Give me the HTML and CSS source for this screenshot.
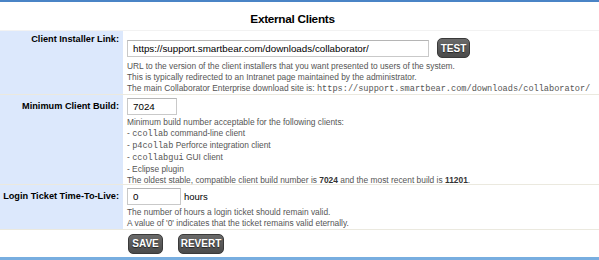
FILE: index.html
```html
<!DOCTYPE html>
<html>
<head>
<meta charset="utf-8">
<link rel="stylesheet" href="styles.css">
</head>
<body>
<div class="panel">
  <div class="title">External Clients</div>
  <div class="row r1">
    <div class="label">Client Installer Link:</div>
    <div class="value">
      <div class="field">
        <input class="text url" type="text" value="https://support.smartbear.com/downloads/collaborator/">
        <button class="btn test">TEST</button>
      </div>
      <div class="desc">
        URL to the version of the client installers that you want presented to users of the system.<br>
        This is typically redirected to an Intranet page maintained by the administrator.<br>
        The main Collaborator Enterprise download site is: <code>https://support.smartbear.com/downloads/collaborator/</code>
      </div>
    </div>
  </div>
  <div class="row r2">
    <div class="label">Minimum Client Build:</div>
    <div class="value">
      <div class="field">
        <input class="text build" type="text" value="7024">
      </div>
      <div class="desc">
        Minimum build number acceptable for the following clients:<br>
        - <code>ccollab</code> command-line client<br>
        - <code>p4collab</code> Perforce integration client<br>
        - <code>ccollabgui</code> GUI client<br>
        - Eclipse plugin<br>
        The oldest stable, compatible client build number is <b>7024</b> and the most recent build is <b>11201</b>.
      </div>
    </div>
  </div>
  <div class="row r3">
    <div class="label">Login Ticket Time-To-Live:</div>
    <div class="value">
      <div class="field">
        <input class="text ttl" type="text" value="0"><span class="unit">hours</span>
      </div>
      <div class="desc">
        The number of hours a login ticket should remain valid.<br>
        A value of '0' indicates that the ticket remains valid eternally.
      </div>
    </div>
  </div>
  <div class="actions">
    <button class="btn save">SAVE</button>
    <button class="btn revert">REVERT</button>
  </div>
</div>
</body>
</html>
```
FILE: styles.css
```css
html, body {
  margin: 0;
  padding: 0;
  background: #fff;
}
body {
  font-family: "Liberation Sans", Arial, sans-serif;
  width: 599px;
  height: 260px;
  overflow: hidden;
}
.panel {
  border-top: 2px solid #4a84c6;
  border-bottom: 3px solid #78aee0;
  height: 255px;
  display: flex;
  flex-direction: column;
}
.title {
  height: 28px;
  line-height: 35px;
  text-align: center;
  font-weight: bold;
  font-size: 11.8px;
  letter-spacing: -0.3px;
  color: #000;
  padding-right: 14px;
  border-bottom: 1px solid #f2f2f2;
}
.row {
  display: flex;
  border-bottom: 1px solid #ebe9df;
}
.label {
  width: 119px;
  flex: none;
  background: #dce8fc;
  text-align: right;
  padding: 5px 4px 0 0;
  font-weight: bold;
  font-size: 9.2px;
  color: #000;
  line-height: 12px;
  white-space: nowrap;
}
.value {
  flex: 1;
  padding-left: 4px;
}
.r1 { height: 63px; }
.r1 .label { padding-top: 2px; }
.r1 .value { padding-top: 7px; }
.r1 .desc { padding-top: 3px; }
.r2 { height: 89px; }
.r2 .value { padding-top: 1px; }
.r3 { height: 44px; }
.r3 .value { padding-top: 1px; }
.field {
  display: flex;
  align-items: center;
  height: 20px;
}
.text {
  box-sizing: border-box;
  height: 17px;
  border: 1px solid #c9c9c9;
  border-top-color: #b5b5b5;
  padding: 0 5px;
  margin: 0;
  font-family: "Liberation Sans", Arial, sans-serif;
  font-size: 9.8px;
  color: #000;
  background: #fff;
  outline: none;
}
.url { width: 302px; }
.build { width: 50px; }
.ttl { width: 54px; }
.unit {
  font-size: 9.5px;
  margin-left: 3px;
  color: #000;
}
.desc {
  font-size: 8.4px;
  line-height: 11px;
  color: #555;
  padding-top: 1px;
}
.desc b { color: #333; }
code {
  font-family: "Liberation Mono", "Courier New", monospace;
  font-size: 8.6px;
}
.btn {
  box-sizing: border-box;
  height: 20px;
  border: 1px solid #3a3a3a;
  border-radius: 5px;
  background: linear-gradient(#6a6a6a, #4a4a4a);
  color: #fff;
  font-family: "Liberation Sans", Arial, sans-serif;
  font-weight: bold;
  font-size: 10px;
  text-shadow: 0 1px 1px #222;
  padding: 0;
  margin: 0;
}
.test { width: 33px; margin-left: 8px; }
.save { width: 35px; }
.revert { width: 46px; margin-left: 15px; }
.actions {
  flex: 1;
  display: flex;
  align-items: center;
  padding-left: 128px;
}
```
